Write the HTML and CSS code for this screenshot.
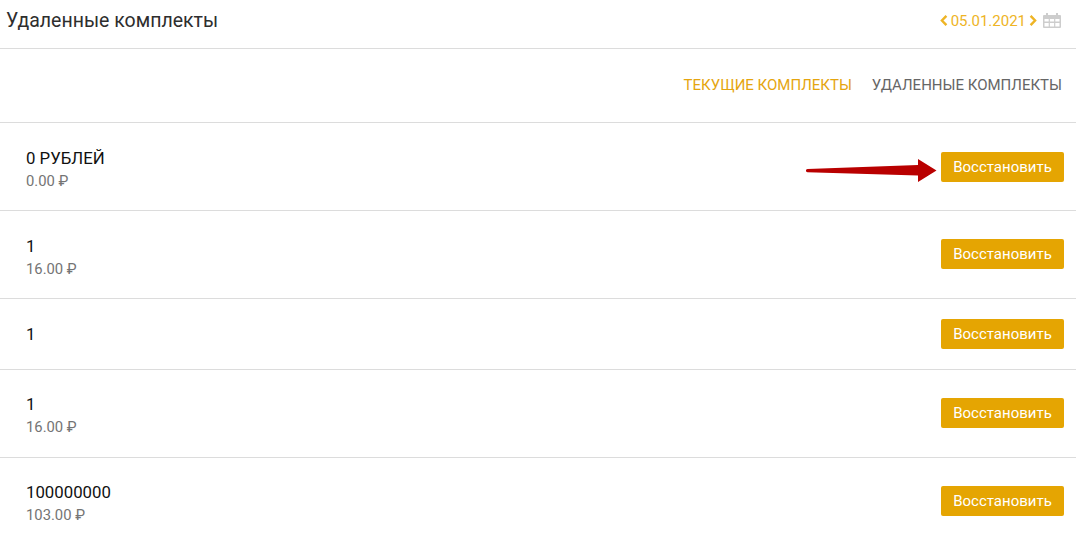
FILE: index.html
```html
<!DOCTYPE html>
<html lang="ru">
<head>
<meta charset="utf-8">
<title>Удаленные комплекты</title>
<link rel="stylesheet" href="styles.css">
</head>
<body>
<header class="topbar">
  <h1 class="title">Удаленные комплекты</h1>
  <div class="date">
    <svg class="chev" width="8" height="11" viewBox="0 0 8 11"><path d="M6.4.8 1.9 5.5l4.5 4.7" fill="none" stroke="currentColor" stroke-width="2.4"/></svg>
    <span>05.01.2021</span>
    <svg class="chev" width="8" height="11" viewBox="0 0 8 11"><path d="M1.6.8l4.5 4.7-4.5 4.7" fill="none" stroke="currentColor" stroke-width="2.4"/></svg>
    <svg class="cal" width="18" height="15" viewBox="0 0 18 15"><path fill="#cdcdcd" d="M1 2h2V0h2v2h8V0h2v2h2a1 1 0 0 1 1 1v11a1 1 0 0 1-1 1H1a1 1 0 0 1-1-1V3a1 1 0 0 1 1-1z"/><path fill="#fff" d="M1.5 6h4.2v2.6H1.5zM6.9 6h4.2v2.6H6.9zM12.3 6h4.2v2.6h-4.2zM1.5 10h4.2v3.4H1.5zM6.9 10h4.2v3.4H6.9zM12.3 10h4.2v3.4h-4.2z"/></svg>
  </div>
</header>
<nav class="tabs">
  <a class="tab tab-active">ТЕКУЩИЕ КОМПЛЕКТЫ</a>
  <a class="tab">УДАЛЕННЫЕ КОМПЛЕКТЫ</a>
</nav>
<main>
  <section class="row">
    <div class="info"><div class="name">0 РУБЛЕЙ</div><div class="price">0.00 ₽</div></div>
    <svg class="arrow" width="132" height="26" viewBox="0 0 132 26"><path fill="#b90000" d="M2.5 11 113 7V1l18.5 11.5L113 24v-6.5L2.5 14.2a1.6 1.6 0 0 1 0-3.2z"/></svg>
    <button class="btn">Восстановить</button>
  </section>
  <section class="row">
    <div class="info"><div class="name">1</div><div class="price">16.00 ₽</div></div>
    <button class="btn">Восстановить</button>
  </section>
  <section class="row row-short">
    <div class="info"><div class="name">1</div></div>
    <button class="btn">Восстановить</button>
  </section>
  <section class="row">
    <div class="info"><div class="name">1</div><div class="price">16.00 ₽</div></div>
    <button class="btn">Восстановить</button>
  </section>
  <section class="row">
    <div class="info"><div class="name">100000000</div><div class="price">103.00 ₽</div></div>
    <button class="btn">Восстановить</button>
  </section>
</main>
</body>
</html>
```
FILE: styles.css
```css
* { box-sizing: border-box; }
html, body { margin: 0; height: 100%; overflow: hidden; }
body { background: #fff; font-family: Roboto, "Liberation Sans", sans-serif; color: #222; }
.topbar {
  height: 49px;
  border-bottom: 1px solid #dcdcdc;
  display: flex;
  align-items: center;
  justify-content: space-between;
  padding: 0 15px 7px 6px;
}
.title { margin: 0; font-size: 19.5px; font-weight: 400; color: #2e2e2e; }
.date { display: flex; align-items: center; gap: 3px; color: #eeb425; font-size: 15px; }
.chev { display: block; }
.cal { display: block; margin-left: 3px; }
.tabs {
  height: 74.4px;
  border-bottom: 1px solid #dcdcdc;
  display: flex;
  justify-content: flex-end;
  align-items: flex-start;
  gap: 20px;
  padding: 27px 14px 0 0;
}
.tab { font-size: 15px; line-height: 18px; color: #666; }
.tab-active { color: #e5a50f; }
.row {
  position: relative;
  height: 87.7px;
  border-bottom: 1px solid #dcdcdc;
  display: flex;
  align-items: center;
  justify-content: space-between;
  padding: 0 12px 0 26px;
}
.row-short { height: 71.1px; }
.info { display: flex; flex-direction: column; }
.name { font-size: 16.8px; line-height: 24px; color: #111; }
.price { font-size: 14.8px; line-height: 23px; color: #747474; margin-bottom: -5.5px; }
.btn {
  border: 0;
  border-radius: 2px;
  background: #e5a502;
  color: #fff;
  font-family: inherit;
  font-size: 15px;
  height: 30px;
  width: 123px;
  padding: 0;
}
.arrow { position: absolute; left: 805px; top: 35px; }
```
